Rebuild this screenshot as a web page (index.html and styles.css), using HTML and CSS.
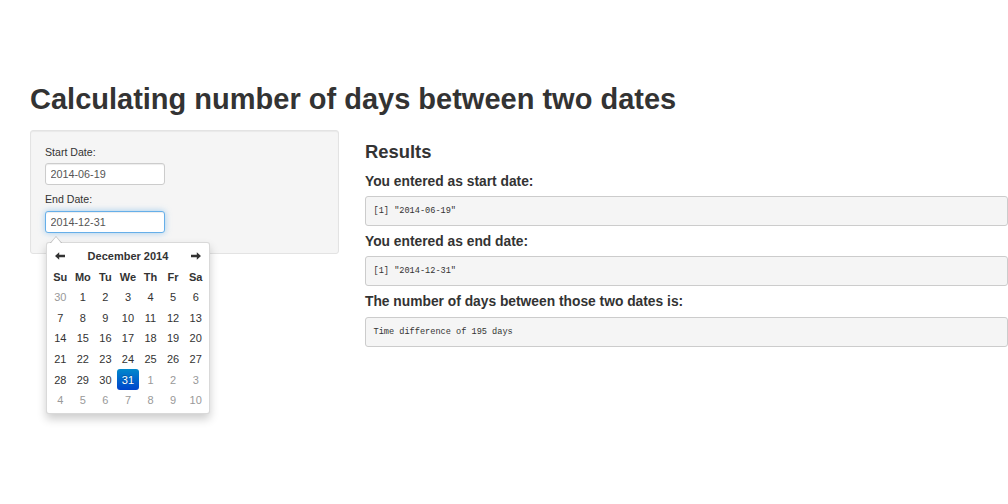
FILE: index.html
```html
<!DOCTYPE html>
<html lang="en">
<head>
<meta charset="utf-8">
<title>Days between two dates</title>
<link rel="stylesheet" href="styles.css">
</head>
<body>
<div class="page">
  <h1 class="title">Calculating number of days between two dates</h1>
  <div class="row">
    <div class="sidebar">
      <div class="well">
        <div class="form-group">
          <label class="control-label">Start Date:</label>
          <input class="form-control" type="text" value="2014-06-19">
        </div>
        <div class="form-group last">
          <label class="control-label">End Date:</label>
          <div class="input-wrap">
            <input class="form-control focused" type="text" value="2014-12-31">
            <div class="datepicker">
              <table class="cal">
                <thead>
                  <tr class="cal-head">
                    <th class="nav"><svg class="arrow" width="10" height="8" viewBox="0 0 10 8"><path d="M0 4 L4.2 0.3 L4.2 2.8 L10 2.8 L10 5.2 L4.2 5.2 L4.2 7.7 Z"/></svg></th>
                    <th class="month" colspan="5">December 2014</th>
                    <th class="nav"><svg class="arrow" width="10" height="8" viewBox="0 0 10 8"><path d="M10 4 L5.8 0.3 L5.8 2.8 L0 2.8 L0 5.2 L5.8 5.2 L5.8 7.7 Z"/></svg></th>
                  </tr>
                  <tr class="dow">
                    <th>Su</th><th>Mo</th><th>Tu</th><th>We</th><th>Th</th><th>Fr</th><th>Sa</th>
                  </tr>
                </thead>
                <tbody>
                  <tr><td class="old">30</td><td>1</td><td>2</td><td>3</td><td>4</td><td>5</td><td>6</td></tr>
                  <tr><td>7</td><td>8</td><td>9</td><td>10</td><td>11</td><td>12</td><td>13</td></tr>
                  <tr><td>14</td><td>15</td><td>16</td><td>17</td><td>18</td><td>19</td><td>20</td></tr>
                  <tr><td>21</td><td>22</td><td>23</td><td>24</td><td>25</td><td>26</td><td>27</td></tr>
                  <tr><td>28</td><td>29</td><td>30</td><td class="active">31</td><td class="new">1</td><td class="new">2</td><td class="new">3</td></tr>
                  <tr><td class="new">4</td><td class="new">5</td><td class="new">6</td><td class="new">7</td><td class="new">8</td><td class="new">9</td><td class="new">10</td></tr>
                </tbody>
              </table>
            </div>
          </div>
        </div>
      </div>
    </div>
    <div class="main">
      <h3 class="results-title">Results</h3>
      <h4 class="label-h">You entered as start date:</h4>
      <pre class="output">[1] "2014-06-19"</pre>
      <h4 class="label-h">You entered as end date:</h4>
      <pre class="output">[1] "2014-12-31"</pre>
      <h4 class="label-h">The number of days between those two dates is:</h4>
      <pre class="output">Time difference of 195 days</pre>
    </div>
  </div>
</div>
</body>
</html>
```

FILE: styles.css
```css
html, body {
  margin: 0;
  padding: 0;
  background: #ffffff;
  overflow: hidden;
}

body {
  font-family: "Liberation Sans", Arial, Helvetica, sans-serif;
  color: #333333;
  width: 1008px;
  height: 504px;
}

.page {
  padding-left: 30px;
}

.title {
  margin: 84px 0 14px 0;
  font-size: 29px;
  line-height: 1.1;
  font-weight: bold;
  color: #333333;
}

.row {
  display: flex;
  align-items: flex-start;
}

.sidebar {
  width: 309px;
  flex: none;
}

.well {
  background: #f5f5f5;
  border: 1px solid #e3e3e3;
  border-radius: 3px;
  box-shadow: inset 0 1px 1px rgba(0, 0, 0, 0.05);
  padding: 13px 14px 20px 14px;
}

.form-group {
  margin-bottom: 6px;
}

.form-group.last {
  margin-bottom: 0;
}

.control-label {
  display: block;
  font-size: 10.6px;
  line-height: 16px;
  margin-bottom: 3.5px;
  color: #333333;
}

.input-wrap {
  position: relative;
  width: 120px;
}

.form-control {
  display: block;
  box-sizing: border-box;
  width: 120px;
  height: 22px;
  margin: 0;
  padding: 0 4.5px;
  font-family: "Liberation Sans", Arial, sans-serif;
  font-size: 10.8px;
  color: #555555;
  background: #ffffff;
  border: 1px solid #cccccc;
  border-radius: 3px;
  box-shadow: inset 0 1px 1px rgba(0, 0, 0, 0.075);
  outline: none;
}

.form-control.focused {
  border-color: #66afe9;
  box-shadow: inset 0 1px 1px rgba(0, 0, 0, 0.075), 0 0 6px rgba(102, 175, 233, 0.6);
}

.datepicker {
  position: absolute;
  top: 31px;
  left: 1px;
  width: 164px;
  box-sizing: border-box;
  padding: 3px 2px;
  background: #ffffff;
  border: 1px solid rgba(0, 0, 0, 0.15);
  border-radius: 3px;
  box-shadow: 0 5px 10px rgba(0, 0, 0, 0.2);
  z-index: 10;
}

.datepicker::before {
  content: "";
  position: absolute;
  top: -7px;
  left: 3px;
  border-left: 6px solid transparent;
  border-right: 6px solid transparent;
  border-bottom: 7px solid rgba(0, 0, 0, 0.2);
}

.datepicker::after {
  content: "";
  position: absolute;
  top: -6px;
  left: 4px;
  border-left: 5px solid transparent;
  border-right: 5px solid transparent;
  border-bottom: 6px solid #ffffff;
}

.cal {
  width: 158px;
  border-collapse: separate;
  border-spacing: 0;
  table-layout: fixed;
  font-size: 11px;
}

.cal th,
.cal td {
  height: 20.57px;
  padding: 0;
  text-align: center;
  vertical-align: middle;
  color: #333333;
}

.cal th {
  font-weight: bold;
}

.cal .nav {
  line-height: 0;
}

.arrow {
  fill: #333333;
  display: inline-block;
}

.cal td {
  font-weight: normal;
  border-radius: 3px;
}

.cal td.old,
.cal td.new {
  color: #999999;
}

.cal td.active {
  color: #ffffff;
  background-color: #0044cc;
  background-image: linear-gradient(to bottom, #0088cc, #0044cc);
  text-shadow: 0 -1px 0 rgba(0, 0, 0, 0.25);
}

.main {
  width: 643px;
  flex: none;
  margin-left: 26px;
}

.results-title {
  margin: 12px 0 12px 0;
  font-size: 18.4px;
  line-height: 1.1;
  font-weight: bold;
}

.label-h {
  margin: 8px 0 7px 0;
  font-size: 13.8px;
  line-height: 1.1;
  font-weight: bold;
}

.output {
  box-sizing: border-box;
  width: 100%;
  height: 30px;
  margin: 0;
  padding: 0 7.5px;
  font-family: "Liberation Mono", "DejaVu Sans Mono", monospace;
  font-size: 8.6px;
  line-height: 28px;
  color: #333333;
  background: #f5f5f5;
  border: 1px solid #cccccc;
  border-radius: 3px;
  white-space: pre;
  overflow: hidden;
}
```
